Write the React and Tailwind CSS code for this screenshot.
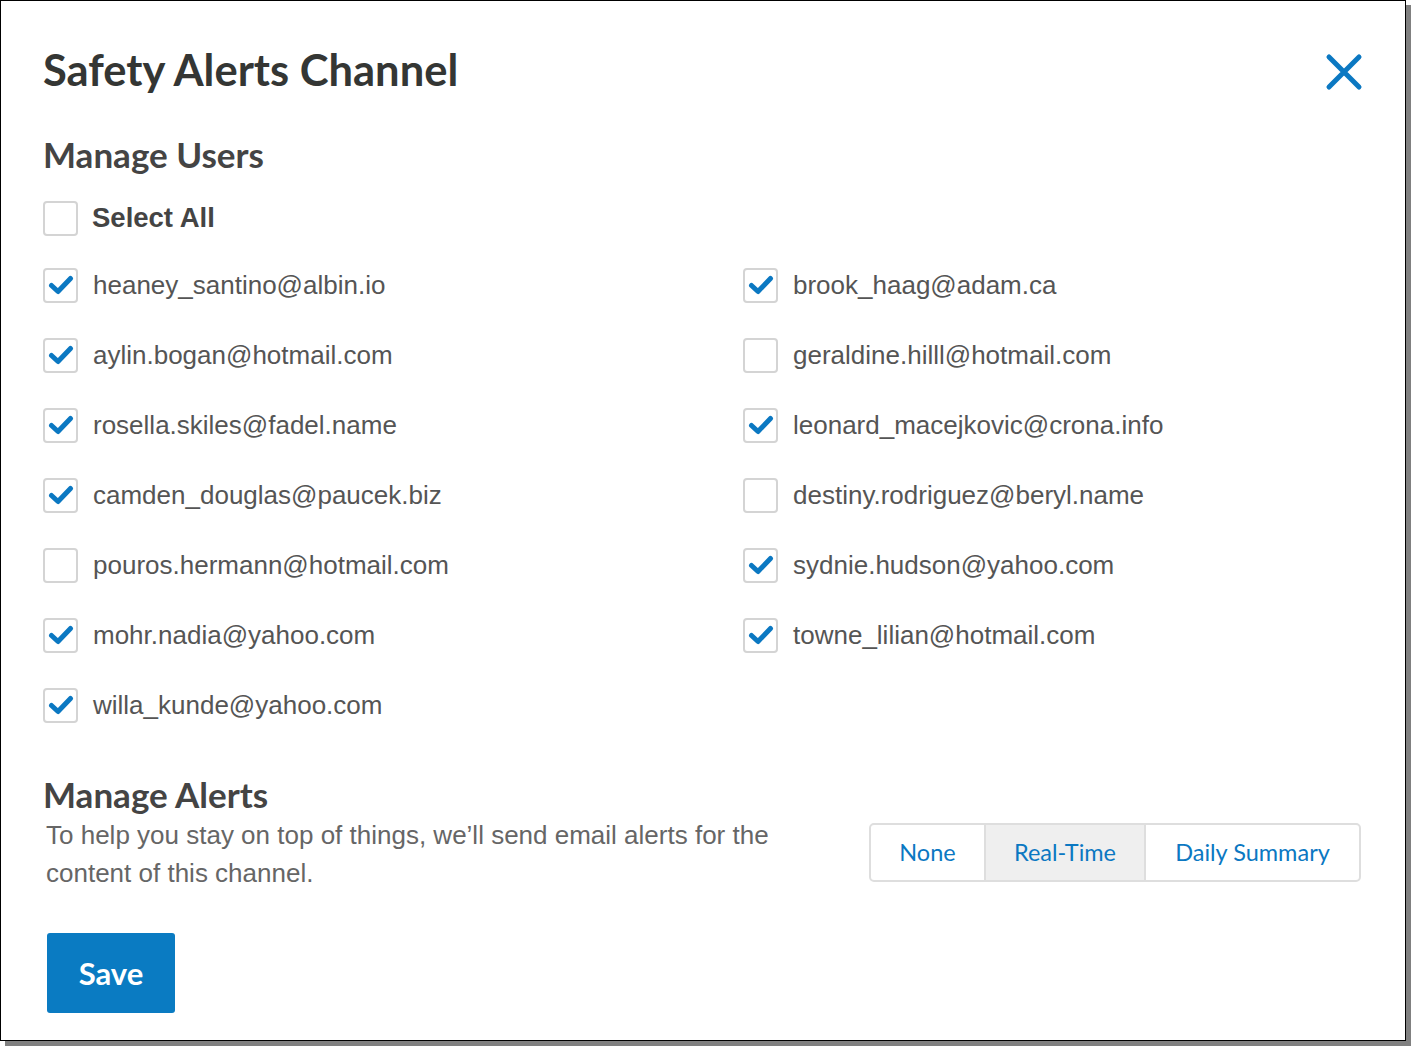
import React from 'react';

const users = [
    [
        { email: 'heaney_santino@albin.io', checked: true },
        { email: 'aylin.bogan@hotmail.com', checked: true },
        { email: 'rosella.skiles@fadel.name', checked: true },
        { email: 'camden_douglas@paucek.biz', checked: true },
        { email: 'pouros.hermann@hotmail.com', checked: false },
        { email: 'mohr.nadia@yahoo.com', checked: true },
        { email: 'willa_kunde@yahoo.com', checked: true },
    ],
    [
        { email: 'brook_haag@adam.ca', checked: true },
        { email: 'geraldine.hilll@hotmail.com', checked: false },
        { email: 'leonard_macejkovic@crona.info', checked: true },
        { email: 'destiny.rodriguez@beryl.name', checked: false },
        { email: 'sydnie.hudson@yahoo.com', checked: true },
        { email: 'towne_lilian@hotmail.com', checked: true },
    ],
];

function Box({ checked }) {
    return (
        <span className="w-[35px] h-[35px] shrink-0 rounded-[4px] border-2 border-[#d4d4d4] bg-white flex items-center justify-center">
            {checked && (
                <svg width="26" height="22" viewBox="0 0 26 22" fill="none">
                    <path d="M3.5 11.5 L10 17.5 L22.5 4.5" stroke="#0b78c2" strokeWidth="5" strokeLinecap="round" strokeLinejoin="round" />
                </svg>
            )}
        </span>
    );
}

function UserRow({ email, checked }) {
    return (
        <div className="h-[70px] flex items-center gap-[15px]">
            <Box checked={checked} />
            <span className="text-[26px] text-[#555] font-['Liberation_Sans',Arial,sans-serif]">{email}</span>
        </div>
    );
}

export default function App() {
    const bogle = "font-['Lato','Open_Sans',sans-serif]";
    return (
        <div className="w-[1411px] h-[1047px] bg-white">
            <div className="w-[1406px] h-[1041px] bg-white border border-black shadow-[5px_5px_0_#808080] pl-[41px] pr-[44px] pt-[40px] flex flex-col">
                {/* header */}
                <div className="flex items-center justify-between h-[56px]">
                    <h1 className={`${bogle} text-[43.5px] font-bold leading-[56px] text-[#343634] pl-px`}>Safety Alerts Channel</h1>
                    <svg width="40" height="40" viewBox="0 0 40 40" className="mr-[-3px] mt-[6px]">
                        <path d="M5 5 L35 35 M35 5 L5 35" stroke="#0b78c2" strokeWidth="5" strokeLinecap="round" />
                    </svg>
                </div>

                <h2 className={`${bogle} text-[35px] font-bold leading-[42px] text-[#444] mt-[36px] pl-px`}>Manage Users</h2>

                <div className="h-[54px] mt-[16px] flex items-center gap-[14px] pl-px">
                    <Box checked={false} />
                    <span className="text-[27.5px] font-bold text-[#444] font-['Liberation_Sans',Arial,sans-serif]">Select All</span>
                </div>

                <div className="flex mt-[5px] pl-px">
                    <div className="w-[700px]">
                        {users[0].map((u) => <UserRow key={u.email} {...u} />)}
                    </div>
                    <div>
                        {users[1].map((u) => <UserRow key={u.email} {...u} />)}
                    </div>
                </div>

                {/* alerts */}
                <h2 className={`${bogle} text-[35px] font-bold leading-[40px] text-[#444] mt-[34px] pl-px`}>Manage Alerts</h2>
                <div className="flex items-start justify-between mt-[2px]">
                    <p className="w-[770px] text-[26px] leading-[38px] text-[#666] font-['Liberation_Sans',Arial,sans-serif] pl-[4px]">
                        To help you stay on top of things, we’ll send email alerts for the content of this channel.
                    </p>
                    <div className={`${bogle} flex h-[59px] mt-[7px] rounded-[5px] border-2 border-[#dedede] text-[23.5px] text-[#0b78c2] overflow-hidden`}>
                        <button className="w-[113px] flex items-center justify-center">None</button>
                        <button className="w-[162px] flex items-center justify-center bg-[#efefef] border-x-2 border-[#dedede]">Real-Time</button>
                        <button className="w-[213px] flex items-center justify-center">Daily Summary</button>
                    </div>
                </div>

                <button className={`${bogle} mt-[41px] ml-[5px] w-[128px] h-[80px] rounded-[3px] bg-[#0a7bc2] text-white text-[31px] font-bold`}>Save</button>
            </div>
        </div>
    );
}
